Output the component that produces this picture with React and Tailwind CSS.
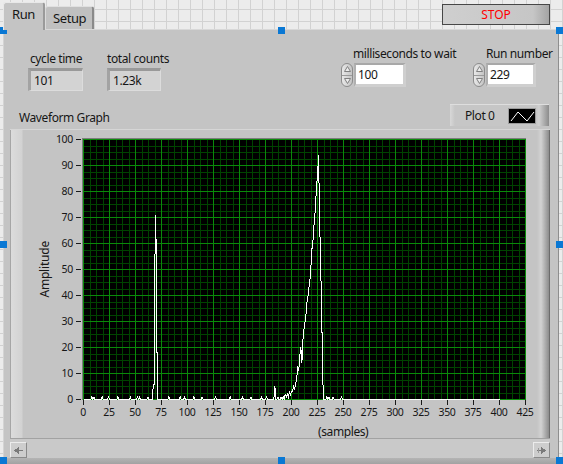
import React from "react";

const FONT = "font-['Noto_Sans',sans-serif]";

const SPIKES = {
  8: 1, 10: 1, 18: 1, 24: 1, 33: 1, 45: 1, 52: 1, 54: 1, 62: 1,
  67: 5, 68: 6, 69: 71, 70: 58,
  82: 1, 93: 1, 97: 1, 106: 1, 114: 1, 127: 1, 141: 1, 153: 1, 161: 1, 171: 1, 176: 1,
  184: 5, 187: 1, 190: 1, 192: 1, 194: 2, 195: 1, 196: 2, 197: 1, 198: 3, 199: 2, 200: 3,
  201: 3, 202: 5, 203: 4, 204: 6, 205: 8, 206: 13, 207: 11, 208: 17, 209: 20, 210: 14,
  211: 23, 212: 27, 213: 30, 214: 33, 215: 38, 216: 40, 217: 44, 218: 47, 219: 53, 220: 60,
  221: 62, 222: 70, 223: 73, 224: 82, 225: 86, 226: 94, 227: 70, 228: 52, 229: 35, 230: 8,
  234: 1, 236: 1, 240: 1, 248: 1,
};

const DATA = Array.from({ length: 401 }, (_, i) => SPIKES[i] || 0);
const POINTS = DATA.map((v, i) => `${(0.5 + i * 1.04).toFixed(2)},${(260.5 - v * 2.6).toFixed(2)}`).join(" ");

const VX = Array.from({ length: 69 }, (_, k) => ({ x: Math.round(k * 6.5) + 0.5, major: k % 4 === 0 }));
const HY = Array.from({ length: 41 }, (_, k) => ({ y: Math.round(k * 6.5) + 0.5, major: k % 4 === 0 }));

const YLABELS = [100, 90, 80, 70, 60, 50, 40, 30, 20, 10, 0];
const XLABELS = [0, 25, 50, 75, 100, 125, 150, 175, 200, 225, 250, 275, 300, 325, 350, 375, 400, 425];

function Plot() {
  return (
    <svg width="443" height="261" className="block" shapeRendering="crispEdges">
      <rect x="0" y="0" width="443" height="261" fill="#000" />
      {VX.filter((l) => !l.major).map((l) => (
        <line key={"vx" + l.x} x1={l.x} y1="0" x2={l.x} y2="261" stroke="#004400" strokeWidth="1" />
      ))}
      {HY.filter((l) => !l.major).map((l) => (
        <line key={"hy" + l.y} x1="0" y1={l.y} x2="443" y2={l.y} stroke="#004400" strokeWidth="1" />
      ))}
      {VX.filter((l) => l.major).map((l) => (
        <line key={"VX" + l.x} x1={l.x} y1="0" x2={l.x} y2="261" stroke="#0a8a0a" strokeWidth="1" />
      ))}
      {HY.filter((l) => l.major).map((l) => (
        <line key={"HY" + l.y} x1="0" y1={l.y} x2="443" y2={l.y} stroke="#0a8a0a" strokeWidth="1" />
      ))}
      <polyline points={POINTS} fill="none" stroke="#ffffff" strokeWidth="1" />
    </svg>
  );
}

function Spinner() {
  return (
    <div className="w-[12px] h-[24px] rounded-[6px] border border-[#8c8c8c] bg-[linear-gradient(to_right,#e8e8e8,#c4c4c4)] flex flex-col overflow-hidden">
      <div className="flex-1 flex items-center justify-center border-b border-[#9a9a9a]">
        <svg width="7" height="6">
          <polygon points="3.5,0.5 6.5,5.5 0.5,5.5" fill="#ececec" stroke="#808080" strokeWidth="1" />
        </svg>
      </div>
      <div className="flex-1 flex items-center justify-center">
        <svg width="7" height="6">
          <polygon points="0.5,0.5 6.5,0.5 3.5,5.5" fill="#ececec" stroke="#808080" strokeWidth="1" />
        </svg>
      </div>
    </div>
  );
}

function Indicator({ label, value, width, labelPad }) {
  return (
    <div className={`flex flex-col ${width}`}>
      <div className={`h-[16px] leading-[16px] whitespace-nowrap ${labelPad}`}>{label}</div>
      <div className="mt-[1px] h-[23px] border-t-[3px] border-l-[3px] border-r border-b border-t-[#999999] border-l-[#a3a3a3] border-r-[#dcdcdc] border-b-[#dcdcdc] bg-[#d3d3d3] flex items-center pl-[3px] leading-[16px]">
        {value}
      </div>
    </div>
  );
}

function Control({ label, value, width, labelPad, fieldW }) {
  return (
    <div className={`flex flex-col ${width}`}>
      <div className={`h-[16px] leading-[16px] whitespace-nowrap ${labelPad}`}>{label}</div>
      <div className="mt-[1px] flex gap-[1px]">
        <Spinner />
        <div className={`${fieldW} h-[24px] border-t-2 border-l-2 border-r-[3px] border-b-[3px] border-t-[#a8a8a8] border-l-[#b0b0b0] border-r-[#cfcfcf] border-b-[#cfcfcf] bg-white flex items-center pl-[2px] leading-[16px]`}>
          {value}
        </div>
      </div>
    </div>
  );
}

function ScrollBtn({ dir }) {
  return (
    <div className="w-[17px] h-[16px] border border-t-[#ececec] border-l-[#ececec] border-r-[#8a8a8a] border-b-[#8a8a8a] bg-[#cdcdcd] flex items-center justify-center">
      {dir === "left" ? (
        <svg width="9" height="7" shapeRendering="crispEdges">
          <polygon points="0,3.5 5,0 5,7" fill="#7a7a7a" />
          <rect x="5" y="3" width="4" height="1" fill="#7a7a7a" />
        </svg>
      ) : (
        <svg width="9" height="7" shapeRendering="crispEdges">
          <polygon points="9,3.5 4,0 4,7" fill="#7a7a7a" />
          <rect x="0" y="3" width="4" height="1" fill="#7a7a7a" />
          <rect x="1" y="1" width="1" height="5" fill="#9a9a9a" />
        </svg>
      )}
    </div>
  );
}

export default function App() {
  return (
    <div
      className={`relative w-[563px] h-[464px] overflow-hidden bg-[#ececec] bg-[linear-gradient(to_right,#d2d2d2_1px,transparent_1px),linear-gradient(to_bottom,#d2d2d2_1px,transparent_1px)] bg-size-[12px_12px] bg-position-[10px_9px] ${FONT} text-[12px] tracking-[-0.4px] text-[#161616]`}
    >
      {/* header: tabs + stop */}
      <div className="flex h-[29px] pl-[3px]">
        <div className="flex items-end">
          <div className="relative z-10 h-[28px] mb-[-1px] w-[42px] rounded-t-[3px] border-t border-l border-r-2 border-t-[#e8e8e8] border-l-[#e8e8e8] border-r-[#9a9a9a] bg-[#c4c4c4] pl-[8px] pt-[3px] leading-[16px] text-[13px]">
            Run
          </div>
          <div className="h-[23px] w-[49px] rounded-t-[3px] border-t border-l border-r-2 border-t-[#e0e0e0] border-l-[#dadada] border-r-[#8a8a8a] bg-[#c0c0c0] pl-[7px] pt-[3px] leading-[16px] text-[13px]">
            Setup
          </div>
        </div>
        <div className="ml-auto mr-[13px] mt-[4px] self-start w-[108px] h-[21px] border border-[#474747] bg-[linear-gradient(to_right,#cfcfcf,#c6c6c6_90px,#a4a4a4_106px)] flex items-center justify-center text-[#ff0000] leading-[16px] tracking-[0px]">
          STOP
        </div>
      </div>

      {/* tab body */}
      <div className="ml-[3px] w-[556px] h-[435px] bg-[#c4c4c4] border-t border-l border-r border-t-[#d8d8d8] border-l-[#d4d4d4] border-r-[#8e8e8e] flex flex-col">
        {/* top section */}
        <div className="h-[74px] flex justify-between shrink-0">
          <div className="ml-[24px] mt-[21px] flex gap-[24px]">
            <Indicator label="cycle time" value="101" width="w-[55px]" labelPad="pl-[2px]" />
            <Indicator label="total counts" value="1.23k" width="w-[54px]" labelPad="pl-0" />
          </div>
          <div className="mt-[16px] mr-[7px] flex gap-[15px]">
            <Control label="milliseconds to wait" value="100" width="w-[117px]" labelPad="pl-[12px]" fieldW="w-[52px]" />
            <Control label="Run number" value="229" width="w-[78px]" labelPad="pl-[13px]" fieldW="w-[50px]" />
          </div>
        </div>

        {/* legend row */}
        <div className="h-[22px] flex items-end justify-between shrink-0">
          <div className="ml-[15px] leading-[16px]">Waveform Graph</div>
          <div className="self-stretch w-[99px] mr-[9px] border-t border-t-[#dedede] bg-[linear-gradient(to_right,#d8d8d8,#c6c6c6_5px,#c6c6c6_86px,#d0d0d0_89px,#8c8c8c_99px)] flex items-center">
            <span className="pl-[15px] leading-[16px]">Plot 0</span>
            <div className="ml-auto mr-[13px] w-[28px] h-[16px] border border-[#9c9c9c] bg-black">
              <svg width="26" height="14" className="block">
                <polyline points="2,12 9,3 18,12 25,3" fill="none" stroke="#ffffff" strokeWidth="1" />
              </svg>
            </div>
          </div>
        </div>

        {/* graph frame */}
        <div className="mt-[3px] ml-[6px] w-[540px] h-[329px] shrink-0 border-t border-t-[#d6d6d6] bg-[linear-gradient(to_right,#a6a6a6_0px,#a6a6a6_1px,#dcdcdc_1px,#d2d2d2_12px,#c4c4c4_13px,#c4c4c4_527px,#d2d2d2_531px,#8c8c8c_539px,#6c6c6c_539px)] flex flex-col">
          <div className="h-[8px] shrink-0" />
          {/* plot row */}
          <div className="h-[262px] flex shrink-0">
            <div className="w-[72px] flex shrink-0">
              <div className="ml-[27px] w-[16px] flex items-center justify-center">
                <span className="[writing-mode:vertical-rl] rotate-180 leading-[16px] whitespace-nowrap tracking-[-0.2px]">
                  Amplitude
                </span>
              </div>
              <div className="flex-1 flex flex-col mt-[-12px]">
                {YLABELS.map((v) => (
                  <div key={v} className="h-[26px] shrink-0 flex items-center justify-end">
                    <span className="text-[10.5px] leading-[13px] tracking-[-0.3px]">{v}</span>
                    <span className="w-[5px] h-px bg-[#1a1a1a] ml-[3px] mr-[1px]" />
                  </div>
                ))}
              </div>
            </div>
            <div className="w-[444px] h-[262px] border-t border-l border-[#7c7c7c] shrink-0">
              <Plot />
            </div>
          </div>
          {/* x axis */}
          <div className="h-[25px] flex pl-[60px] shrink-0">
            {XLABELS.map((v) => (
              <div key={v} className="w-[26px] shrink-0 flex flex-col items-center">
                <span className="self-start ml-[13px] w-px h-[5px] bg-[#1a1a1a]" />
                <span className="mt-[1px] text-[10.5px] leading-[13px] tracking-[-0.3px]">{v}</span>
              </div>
            ))}
          </div>
          <div className="h-[13px] shrink-0 pl-[308px] leading-[13px]">(samples)</div>
          {/* scrollbar */}
          <div className="h-[20px] shrink-0 border-t border-t-[#a2a2a2] bg-[#c9c9c9] flex items-end justify-between">
            <ScrollBtn dir="left" />
            <ScrollBtn dir="right" />
          </div>
        </div>
        <div className="flex-1 bg-[linear-gradient(to_bottom,#b4b4b4,#a2a2a2)]" />
      </div>

      {/* selection handles */}
      <div className="absolute left-[0px] top-[27px] w-[7px] h-[7px] bg-[#0a78d4]" />
      <div className="absolute left-[278px] top-[27px] w-[7px] h-[7px] bg-[#0a78d4]" />
      <div className="absolute left-[556px] top-[27px] w-[7px] h-[7px] bg-[#0a78d4]" />
      <div className="absolute left-[0px] top-[241px] w-[7px] h-[7px] bg-[#0a78d4]" />
      <div className="absolute left-[556px] top-[241px] w-[7px] h-[7px] bg-[#0a78d4]" />
      <div className="absolute left-[0px] top-[457px] w-[7px] h-[7px] bg-[#0a78d4]" />
      <div className="absolute left-[278px] top-[457px] w-[7px] h-[7px] bg-[#0a78d4]" />
      <div className="absolute left-[556px] top-[457px] w-[7px] h-[7px] bg-[#0a78d4]" />
    </div>
  );
}
